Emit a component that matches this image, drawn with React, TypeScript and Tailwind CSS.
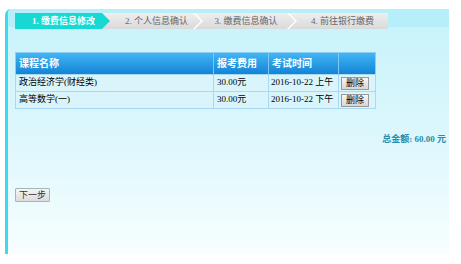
import React from "react";

const font = { fontFamily: '"Liberation Serif", "Noto Sans CJK SC", serif' };

export default function App() {
  const steps = [
    { t: "1. 缴费信息修改", cls: "w-[95px] bg-[#17d8d2] text-white font-bold relative z-10 [clip-path:polygon(0_0,87px_0,95px_50%,87px_100%,0_100%)] pl-[2px]" },
    { t: "2. 个人信息确认", cls: "w-[99px] -ml-[8px] bg-gradient-to-b from-[#efefef] to-[#d9d9d9] text-[#666] [clip-path:polygon(0_0,91px_0,99px_50%,91px_100%,0_100%)] pl-[10px]" },
    { t: "3. 缴费信息确认", cls: "w-[100px] -ml-[6px] bg-gradient-to-b from-[#efefef] to-[#d9d9d9] text-[#666] [clip-path:polygon(0_0,92px_0,100px_50%,92px_100%,0_100%,8px_50%)] pl-[2px]" },
    { t: "4. 前往银行缴费", cls: "w-[99px] -ml-[6px] bg-gradient-to-b from-[#efefef] to-[#d9d9d9] text-[#666] [clip-path:polygon(0_0,100%_0,100%_100%,0_100%,8px_50%)] pl-[8px]" },
  ];
  const rows = [
    { name: "政治经济学(财经类)", fee: "30.00元", time: "2016-10-22 上午" },
    { name: "高等数学(一)", fee: "30.00元", time: "2016-10-22 下午" },
  ];
  return (
    <div className="w-[461px] h-[264px] bg-white overflow-hidden" style={font}>
      <div className="ml-[5px] mt-[9px] w-[444px] h-[245px] rounded-tl-[6px] border-l-[3px] border-[#3fd9ee] bg-gradient-to-b from-[#c5f3fa] via-[#dcf7fc] to-[#f7feff] flex flex-col">
        <div className="h-[18px] bg-[#b6eff9] rounded-tl-[4px] pt-[4px] pl-[7px]">
          <div className="flex w-[373px] h-[16px] bg-white text-[9px] leading-[16px]">
            {steps.map((s, i) => (
              <div key={i} className={`h-[16px] flex items-center justify-center whitespace-nowrap ${s.cls}`}>
                {s.t}
              </div>
            ))}
          </div>
        </div>
        <div className="pl-[7px] pt-[25px]">
          <table className="w-[360px] border-collapse border border-[#8fcdf3] text-[9px] text-black table-fixed">
            <colgroup>
              <col className="w-[198px]" />
              <col className="w-[55px]" />
              <col className="w-[70px]" />
              <col className="w-[37px]" />
            </colgroup>
            <thead>
              <tr className="h-[22px] bg-gradient-to-b from-[#41b6f5] to-[#0f82d5] text-white text-[10px] font-bold text-left">
                <th className="pl-[3px] border-r border-[#7ec7f1] font-bold">课程名称</th>
                <th className="pl-[3px] border-r border-[#7ec7f1] font-bold">报考费用</th>
                <th className="pl-[3px] border-r border-[#7ec7f1] font-bold">考试时间</th>
                <th></th>
              </tr>
            </thead>
            <tbody>
              {rows.map((r, i) => (
                <tr key={i} className="h-[17px] bg-[#d9f5fb]">
                  <td className="pl-[3px] border border-[#a9d8f4]">{r.name}</td>
                  <td className="pl-[3px] border border-[#a9d8f4]">{r.fee}</td>
                  <td className="pl-[2px] border border-[#a9d8f4] whitespace-nowrap">{r.time}</td>
                  <td className="pl-[2px] border border-[#a9d8f4]">
                    <button className="w-[28px] h-[13px] border border-[#9a9a9a] bg-gradient-to-b from-[#f6f6f6] to-[#d6d6d6] text-[9px] leading-[11px] flex items-center justify-center text-black">
                      删除
                    </button>
                  </td>
                </tr>
              ))}
            </tbody>
          </table>
        </div>
        <div className="flex justify-end pr-[3px] mt-[24px] text-[9px] font-bold text-[#2b8cab]">
          总金额: 60.00 元
        </div>
        <div className="pl-[7px] mt-[41px]">
          <button className="w-[35px] h-[14px] border border-[#9fb8b8] rounded-[1px] bg-gradient-to-b from-[#f4f4f4] to-[#dcdcdc] text-[9px] leading-[12px] flex items-center justify-center text-[#333]">
            下一步
          </button>
        </div>
      </div>
    </div>
  );
}
